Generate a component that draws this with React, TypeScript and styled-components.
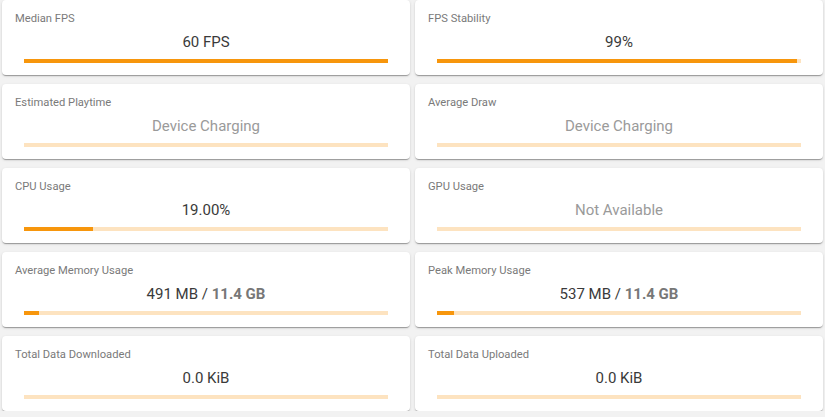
import React from "react"
import styled, { createGlobalStyle } from "styled-components"

const GlobalStyle = createGlobalStyle`
  html, body {
    margin: 0;
    padding: 0;
    background: #f2f2f2;
    font-family: Roboto, "Liberation Sans", Arial, sans-serif;
  }
`

type Stat = {
  title: string
  value: string
  total?: string
  muted?: boolean
  progress: number
}

const stats: Stat[] = [
  { title: "Median FPS", value: "60 FPS", progress: 100 },
  { title: "FPS Stability", value: "99%", progress: 99 },
  { title: "Estimated Playtime", value: "Device Charging", muted: true, progress: 0 },
  { title: "Average Draw", value: "Device Charging", muted: true, progress: 0 },
  { title: "CPU Usage", value: "19.00%", progress: 19 },
  { title: "GPU Usage", value: "Not Available", muted: true, progress: 0 },
  { title: "Average Memory Usage", value: "491 MB / ", total: "11.4 GB", progress: 4.2 },
  { title: "Peak Memory Usage", value: "537 MB / ", total: "11.4 GB", progress: 4.6 },
  { title: "Total Data Downloaded", value: "0.0 KiB", progress: 0 },
  { title: "Total Data Uploaded", value: "0.0 KiB", progress: 0 },
]

const App = () => {
  return (
    <>
      <GlobalStyle />
      <Grid>
        {stats.map(stat => (
          <Card key={stat.title}>
            <Title>{stat.title}</Title>
            <Value $muted={stat.muted}>
              {stat.value}
              {stat.total && <Total>{stat.total}</Total>}
            </Value>
            <Track>
              <Fill style={{ width: `${stat.progress}%` }} />
            </Track>
          </Card>
        ))}
      </Grid>
    </>
  )
}

export default App

const Grid = styled.div`
  display: grid;
  grid-template-columns: 1fr 1fr;
  column-gap: 5px;
  row-gap: 9px;
  padding: 0 2px;
`

const Card = styled.div`
  height: 75px;
  box-sizing: border-box;
  background: #fff;
  border-radius: 4px;
  box-shadow: 0 2px 1px -1px rgba(0, 0, 0, 0.2), 0 1px 1px 0 rgba(0, 0, 0, 0.14),
    0 1px 3px 0 rgba(0, 0, 0, 0.12);
  padding: 12px 22px 0 22px;
  display: flex;
  flex-direction: column;
`

const Title = styled.div`
  font-size: 11.2px;
  line-height: 14px;
  color: #7a7a7a;
  margin-left: -9px;
`

const Value = styled.div<{ $muted?: boolean }>`
  margin-top: 6px;
  font-size: 15px;
  line-height: 20px;
  text-align: center;
  color: ${p => (p.$muted ? "#9a9a9a" : "#3a3a3a")};
`

const Total = styled.span`
  font-weight: 700;
  color: #777;
`

const Track = styled.div`
  margin-top: 7px;
  height: 4px;
  background: #fde3c0;
  overflow: hidden;
`

const Fill = styled.div`
  height: 100%;
  background: #f7960c;
`
